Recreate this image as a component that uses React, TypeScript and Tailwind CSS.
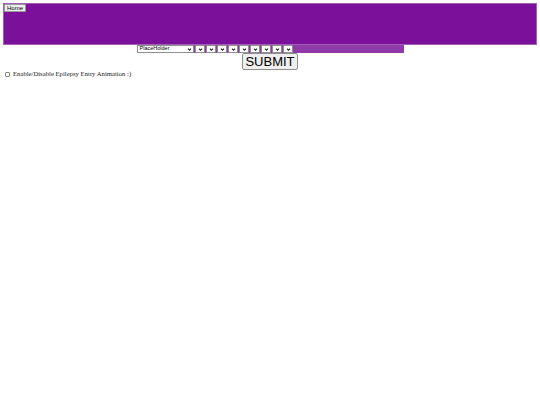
function Chevron() {
  return (
    <svg viewBox="0 0 8 8" className="h-[5px] w-[5px] shrink-0">
      <path d="M1.5 2.5 L4 5.2 L6.5 2.5" fill="none" stroke="#222" strokeWidth="1.7" />
    </svg>
  );
}

function FakeSelect({ label, width }: { label?: string; width: string }) {
  return (
    <div
      className={`flex h-[8px] ${width} items-center justify-between rounded-[1px] border border-[#8f8f8f] bg-white px-[1px]`}
    >
      <span className="pl-[1px] text-[5.5px] leading-none text-black font-['Liberation_Sans',sans-serif]">
        {label}
      </span>
      <Chevron />
    </div>
  );
}

export default function App() {
  const small = Array.from({ length: 9 });
  return (
    <div className="min-h-[405px] bg-white p-[3px]">
      <div className="h-[42px] border border-[#a060b8] bg-[#7b109a]">
        <div className="flex h-[8px] w-[22px] items-center justify-center rounded-[1px] border border-[#999] bg-[#efefef] text-[6px] leading-none text-black font-['Liberation_Sans',sans-serif]">
          Home
        </div>
      </div>
      <div className="flex justify-center">
        <div className="flex h-[8px] w-[267px] gap-[1.5px] bg-[#8f3aa8]">
          <FakeSelect label="PlaceHolder" width="w-[57px]" />
          {small.map((_, i) => (
            <FakeSelect key={i} width="w-[9.5px]" />
          ))}
        </div>
      </div>
      <div className="flex justify-center">
        <div className="flex h-[17px] w-[56px] items-center justify-center rounded-[2px] border border-[#8f8f8f] bg-[#efefef] text-[13px] leading-none text-black font-['Liberation_Sans',sans-serif]">
          SUBMIT
        </div>
      </div>
      <div className="mt-[1px] flex items-center gap-[3px] pl-[2px] text-[6.7px] leading-none text-[#222] font-['Liberation_Serif',serif]">
        <div className="h-[5px] w-[5px] rounded-[1px] border border-[#888] bg-white" />
        Enable/Disable Epilepsy Entry Animation :)
      </div>
    </div>
  );
}
